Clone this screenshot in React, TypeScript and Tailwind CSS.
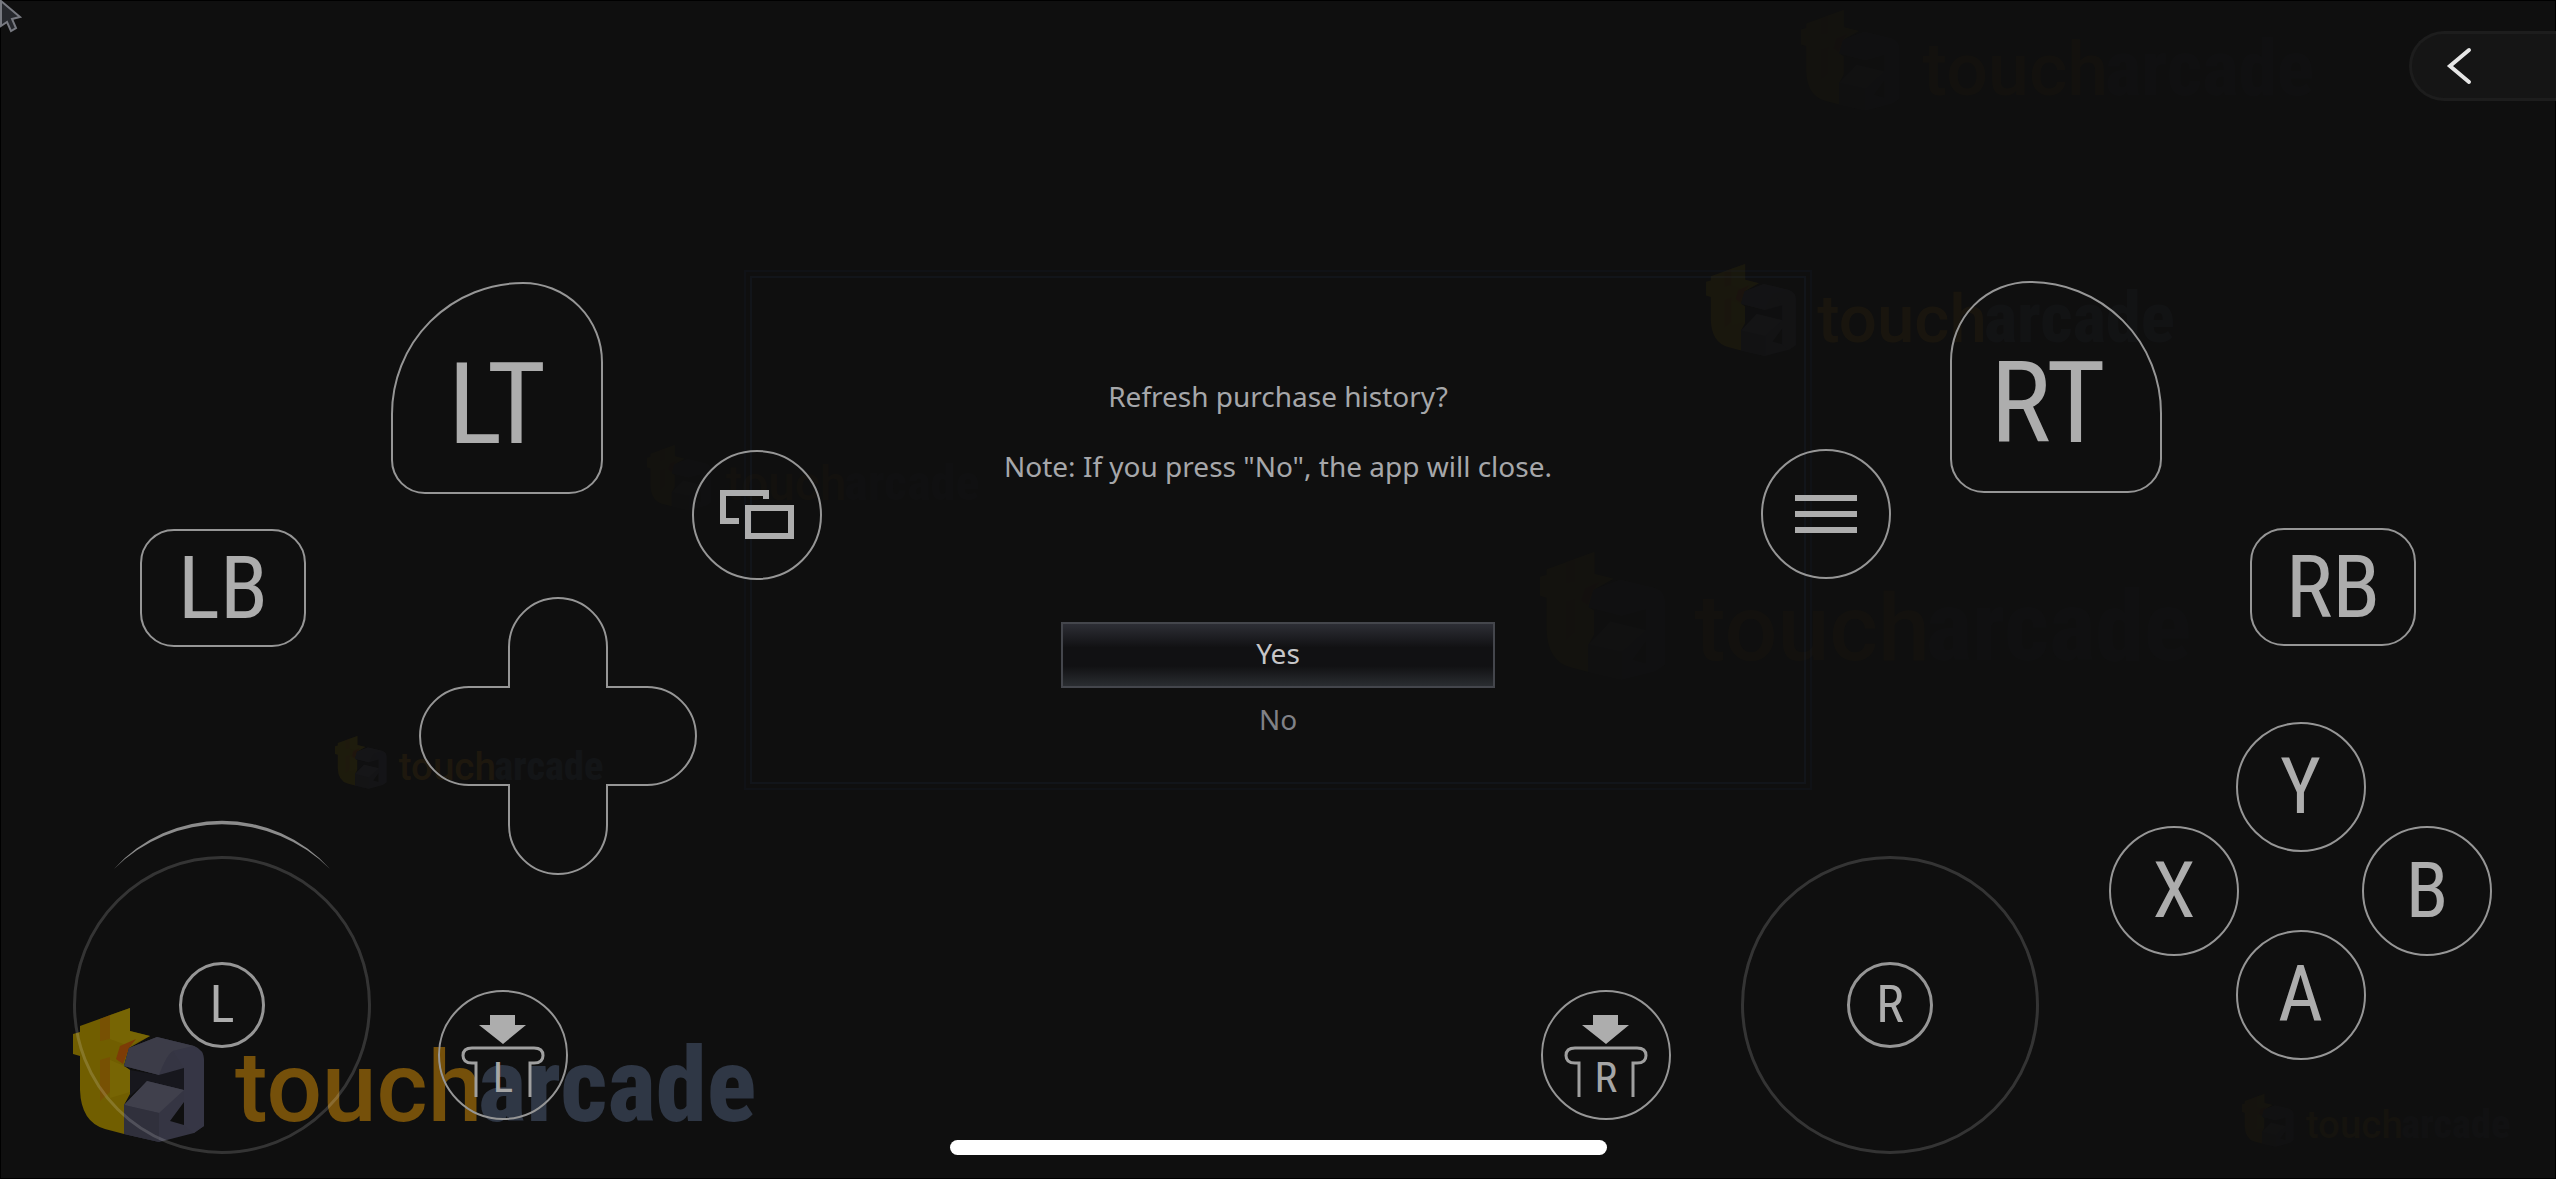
/**
 * Touch overlay for the game client: confirmation dialog in the middle,
 * virtual gamepad on top of it, brand watermarks behind.
 */

import { useState } from 'react';
import type { ReactNode } from 'react';
import clsx from 'clsx';

// Watermarks float freely over the stage, each with its own scale and strength
const WATERMARKS = [
  { id: 'main', className: 'bottom-9 left-[73px] w-[682px]' },
  { id: 'top', className: 'right-[243px] top-2.5 w-[512px] opacity-4' },
  { id: 'trigger', className: 'right-[382px] top-[264px] w-[468px] opacity-10' },
  { id: 'menu', className: 'right-[366px] top-[552px] w-[650px] opacity-4' },
  { id: 'dpad', className: 'left-[335px] bottom-[390px] w-[268px] opacity-15' },
  { id: 'corner', className: 'right-[46px] bottom-8 w-[268px] opacity-6' },
  { id: 'view', className: 'left-[647px] top-[445px] w-[332px] opacity-4' },
];

function Watermark({ className }: { className: string }) {
  return (
    <svg viewBox="0 0 682 135" className={clsx('pointer-events-none absolute overflow-visible', className)} aria-hidden="true">
      {/* yellow "t" block */}
      <path d="M7 18 57 0V23L77 28 56 40 51 58 57 62V86L51 97V126L32 121Q8 114 7 82V48L0 46V26L7 24Z" fill="#715e00" />
      <path d="M27 11 37 7V31L27 33Z M27 52 37 49V84L27 93Z" fill="#7a4c04" opacity="0.7" />
      <path d="M37 7 57 0V23L77 28 56 38 37 31Z M37 52 51 58 57 62V84L37 90Z" fill="#7c6a06" opacity="0.6" />
      <path d="M47 38 63 31 56 40 50 56 43 51Z" fill="#7d3c06" />
      {/* slate "a" block */}
      <path d="M57 62 86 67 111 58V82L74 73 57 88Z" fill="#17171d" />
      <path
        d="M56 40 84 29 121 38Q131 42 131 52V118L121 125 86 134 51 126V97L74 73 111 82V60L86 67 51 58ZM111 94 97 113 111 117Z"
        fill="#353543"
        fillRule="evenodd"
      />
      <path d="M56 40 84 29 121 38 100 43Q94 46 86 67L51 58Z" fill="#3c3c48" />
      <path d="M51 97 74 73 111 82 86 105Z" fill="#40404c" />
      <path d="M51 97 86 105V134L51 126Z" fill="#30303c" />
      <path d="M100 43 121 38Q131 42 131 52V118L121 125 111 117V60Z" fill="#383846" opacity="0.7" />
      <text x="162" y="113" fontSize="98" fill="#75500a" className="font-['Roboto',sans-serif] font-medium">
        touch
      </text>
      <text x="405" y="113" fontSize="103" fill="#2f3745" className="font-['Roboto_Condensed',Roboto,sans-serif] font-extrabold">
        arcade
      </text>
    </svg>
  );
}

interface PadButtonProps {
  label: string;
  className?: string;
  children: ReactNode;
}

function PadButton({ label, className, children }: PadButtonProps) {
  return (
    <button
      type="button"
      aria-label={label}
      className={clsx(
        "flex shrink-0 items-center justify-center border-2 border-[#969696] font-['Roboto_Condensed',Roboto,sans-serif] leading-none text-[#adadad]",
        className
      )}
    >
      {children}
    </button>
  );
}

function RoundButton({ label, className, children }: PadButtonProps) {
  return (
    <PadButton label={label} className={clsx('size-[130px] rounded-full text-[78px]', className)}>
      {children}
    </PadButton>
  );
}

function Stick({ label }: { label: string }) {
  return (
    <div className="flex size-[298px] shrink-0 items-center justify-center rounded-full border-3 border-[#ffffff28]">
      <PadButton label={`${label} stick`} className="size-[86px] rounded-full border-3 text-[52px]">
        {label}
      </PadButton>
    </div>
  );
}

function StickPress({ label, className }: { label: string; className: string }) {
  return (
    <RoundButton label={`Press ${label} stick`} className={className}>
      <svg viewBox="0 0 130 130" className="size-[130px] shrink-0" aria-hidden="true">
        <path d="M52 25H77V35H88L65 54 41 35H52Z" fill="#adadad" />
        <path
          d="M38 107V73H34Q25 73 25 65.500 25 58 34 58H96Q105 58 105 65.500 105 73 96 73H92V107"
          fill="none"
          stroke="#a0a0a0"
          strokeWidth="3"
        />
        <text x="65" y="102" textAnchor="middle" fontSize="43" fill="#a6a6a6">
          {label}
        </text>
      </svg>
    </RoundButton>
  );
}

function DPad() {
  return (
    <button type="button" aria-label="Directional pad">
      <svg viewBox="0 0 278 278" className="size-[278px]" fill="none" stroke="#969696" strokeWidth="2" aria-hidden="true">
        <path d="M90 90V50A49 49 0 0 1 188 50V90H228A49 49 0 0 1 228 188H188V228A49 49 0 0 1 90 228V188H50A49 49 0 0 1 50 90Z" />
      </svg>
    </button>
  );
}

function LeftControls() {
  return (
    <div className="flex flex-col justify-end">
      <div className="flex h-[365px] pl-[140px]">
        <PadButton label="LB" className="h-[118px] w-[166px] self-end rounded-[34px] text-[88px]">
          LB
        </PadButton>
        <PadButton
          label="LT"
          className="ml-[85px] size-[212px] rounded-tl-[132px] rounded-tr-[80px] rounded-b-[34px] pt-8 text-[114px]"
        >
          LT
        </PadButton>
        <RoundButton label="View" className="mb-[67px] ml-[89px] self-end">
          <svg viewBox="0 0 74 50" className="h-[50px] w-[74px]" fill="none" stroke="#adadad" strokeWidth="6" aria-hidden="true">
            <path d="M46 9V3H3V31H19" />
            <rect x="28" y="18" width="43" height="28" />
          </svg>
        </RoundButton>
      </div>

      {/* d-pad tucks in under the shoulder row */}
      <div className="-mt-[50px] flex items-end gap-12 pb-[25px] pl-[73px]">
        <div className="flex flex-col items-center">
          {/* tapered highlight over the stick */}
          <svg viewBox="0 0 216 50" className="-mb-3.5 h-[50px] w-[216px]" aria-hidden="true">
            <path d="M0 49A145 145 0 0 1 216 49A153 153 0 0 0 0 49Z" fill="#8c8c8c" />
          </svg>
          <Stick label="L" />
        </div>
        <div className="flex flex-col gap-[115px] pb-[34px]">
          <DPad />
          <StickPress label="L" className="ml-[19px]" />
        </div>
      </div>
    </div>
  );
}

function RightControls() {
  return (
    <div className="flex flex-col items-end justify-end gap-[76px]">
      <div className="flex h-[365px] pr-[140px]">
        <RoundButton label="Menu" className="mb-[67px] mr-[59px] self-end">
          <svg viewBox="0 0 62 38" className="h-[38px] w-[62px]" stroke="#adadad" strokeWidth="6" aria-hidden="true">
            <path d="M0 3H62M0 19H62M0 35H62" />
          </svg>
        </RoundButton>
        <PadButton
          label="RT"
          className="mr-[88px] size-[212px] rounded-tl-[80px] rounded-tr-[132px] rounded-b-[34px] pt-8 pr-4 text-[114px]"
        >
          RT
        </PadButton>
        <PadButton label="RB" className="h-[118px] w-[166px] self-end rounded-[34px] text-[88px]">
          RB
        </PadButton>
      </div>

      <div className="flex items-end gap-[70px] pr-16 pb-[25px]">
        <StickPress label="R" className="mb-[34px]" />
        <Stick label="R" />
        <div className="mb-[94px] flex w-[383px] items-center justify-between">
          <RoundButton label="X">X</RoundButton>
          <div className="-mx-10 flex flex-col gap-[78px]">
            <RoundButton label="Y">Y</RoundButton>
            <RoundButton label="A">A</RoundButton>
          </div>
          <RoundButton label="B">B</RoundButton>
        </div>
      </div>
    </div>
  );
}

function ConfirmDialog() {
  const [selected, setSelected] = useState('Yes');

  return (
    <section role="dialog" aria-labelledby="dialog-title" className="w-full max-w-[1068px] border-2 border-[#101216] p-1">
      <div className="flex flex-col items-center border-2 border-[#12151a] pt-[98px] pb-7 text-[28px] leading-[40px] text-[#a6a7aa]">
        <h1 id="dialog-title" className="text-center">Refresh purchase history?</h1>
        <p className="mt-[30px] text-center">Note: If you press "No", the app will close.</p>
        <div className="mt-[136px] flex w-[434px] max-w-full flex-col">
          {['Yes', 'No'].map((option) => (
            <button
              key={option}
              type="button"
              onClick={() => setSelected(option)}
              className={clsx(
                'h-[66px] w-full border-2 pb-1',
                selected === option
                  ? 'border-[#44464c] bg-[linear-gradient(#2d2e35,#111113_38%,#111113_68%,#2a2d31)] text-[#c6c6c8]'
                  : 'border-transparent text-[#808186]'
              )}
            >
              {option}
            </button>
          ))}
        </div>
      </div>
    </section>
  );
}

export default function App() {
  return (
    <div className="relative flex min-h-screen flex-col overflow-hidden bg-[#0f0f0f] font-['Noto_Sans',sans-serif] shadow-[inset_0_0_0_1px_black]">
      {WATERMARKS.map((mark) => (
        <Watermark key={mark.id} className={mark.className} />
      ))}

      <main className="flex flex-1 items-center justify-center pb-[81px]">
        <ConfirmDialog />
      </main>

      {/* Home indicator */}
      <footer className="flex justify-center pb-6">
        <div className="h-[15px] w-[657px] rounded-full bg-white" />
      </footer>

      {/* Virtual gamepad, laid over the whole stage */}
      <div className="pointer-events-none absolute inset-0 flex justify-between *:*:*:pointer-events-auto">
        <LeftControls />
        <RightControls />
      </div>

      {/* Overlay drawer handle */}
      <button
        type="button"
        aria-label="Open overlay menu"
        className="absolute right-0 top-[31px] flex h-[70px] w-[147px] items-center rounded-l-full border-3 border-r-0 border-[#1d1d1d] bg-[#151515] pl-[34px]"
      >
        <svg viewBox="0 0 26 38" className="h-[38px] w-[26px]" fill="none" stroke="#e6e6e6" strokeWidth="4" strokeLinecap="round" aria-hidden="true">
          <path d="M23 3 4 19 23 35" />
        </svg>
      </button>

      {/* Pointer */}
      <svg viewBox="0 0 24 34" className="absolute left-0 top-0 h-[34px] w-6" aria-hidden="true">
        <path d="M1 1 20 17 12 19 16 28 11 31 7 22 1 26Z" fill="#26282d" stroke="#777980" strokeWidth="2" />
      </svg>
    </div>
  );
}
